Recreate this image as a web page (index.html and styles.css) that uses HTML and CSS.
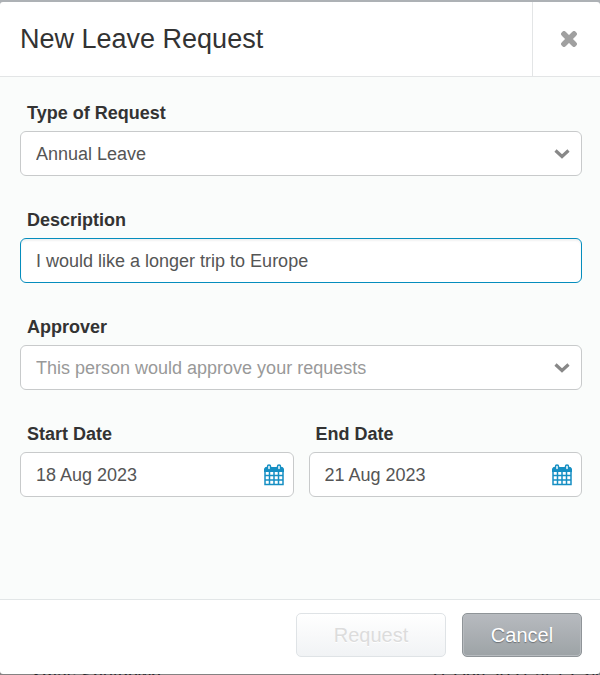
FILE: index.html
```html
<!DOCTYPE html>
<html lang="en">
<head>
<meta charset="utf-8">
<meta name="viewport" content="width=device-width, initial-scale=1">
<title>New Leave Request</title>
<link rel="stylesheet" href="styles.css">
</head>
<body>
<svg class="sprite" aria-hidden="true">
  <symbol id="calendar" viewBox="0 0 20 22">
    <path fill="none" stroke="currentColor" stroke-width="1.500" d="M1 5V20.500H19V5M1 11.500H19M1 16H19M5.500 7V20M10 7V20M14.500 7V20"/>
    <path fill="currentColor" d="M1.500 3H18.500L20 4.500V8H0V4.500Z"/>
    <rect x="3.500" y="1" width="3" height="5" rx="1.500" fill="#fff" stroke="currentColor" stroke-width="1.500"/>
    <rect x="13.500" y="1" width="3" height="5" rx="1.500" fill="#fff" stroke="currentColor" stroke-width="1.500"/>
  </symbol>
  <symbol id="chevron" viewBox="0 0 16 10">
    <path d="M1.500 1.500L8 7.500L14.500 1.500" fill="none" stroke="currentColor" stroke-width="3.200"/>
  </symbol>
</svg>
<form class="dialog">
  <header class="dialog-header">
    <h1 class="dialog-title">New Leave Request</h1>
    <button class="close" type="button" aria-label="Close">
      <svg width="18" height="16" viewBox="0 0 18 16"><path d="M4 3L14 13M14 3L4 13" fill="none" stroke="currentColor" stroke-width="4.500" stroke-linecap="square"/><path d="M4 3L14 13M14 3L4 13" fill="none" stroke="currentColor" stroke-width="5.500" stroke-linecap="round"/></svg>
    </button>
  </header>
  <main class="dialog-body">
    <div class="field">
      <label for="type">Type of Request</label>
      <div class="control">
        <select id="type"><option>Annual Leave</option></select>
        <svg class="chevron"><use href="#chevron"/></svg>
      </div>
    </div>
    <div class="field">
      <label for="description">Description</label>
      <div class="control active">
        <input id="description" type="text" value="I would like a longer trip to Europe">
      </div>
    </div>
    <div class="field">
      <label for="approver">Approver</label>
      <div class="control">
        <select id="approver" class="placeholder"><option>This person would approve your requests</option></select>
        <svg class="chevron"><use href="#chevron"/></svg>
      </div>
    </div>
    <div class="dates">
      <div class="field">
        <label for="start">Start Date</label>
        <div class="control">
          <input id="start" type="text" value="18 Aug 2023">
          <svg class="calendar"><use href="#calendar"/></svg>
        </div>
      </div>
      <div class="field">
        <label for="end">End Date</label>
        <div class="control">
          <input id="end" type="text" value="21 Aug 2023">
          <svg class="calendar"><use href="#calendar"/></svg>
        </div>
      </div>
    </div>
  </main>
  <footer class="dialog-footer">
    <button class="button request" type="submit" disabled>Request</button>
    <button class="button cancel" type="button">Cancel</button>
  </footer>
</form>
<div class="underlay" aria-hidden="true">
  <span>Xmas Shutdown</span>
  <span>21 Dec 2021 at 12:34</span>
</div>
</body>
</html>
```
FILE: styles.css
```css
* {
  box-sizing: border-box;
}

body {
  margin: 0;
  min-height: 100vh;
  display: flex;
  flex-direction: column;
  padding-top: 2px;
  background: linear-gradient(#adb1b5 50%, #858282 50%);
  font-family: "Liberation Sans", Arial, sans-serif;
  font-size: 18px;
  color: #333;
}

.sprite {
  position: absolute;
  width: 0;
  height: 0;
}

.dialog {
  flex: 1;
  display: flex;
  flex-direction: column;
  border-radius: 3px;
  overflow: hidden;
  background: #fff;
}

.dialog-header {
  display: flex;
  justify-content: space-between;
  min-height: 75px;
  border-bottom: 1px solid #e3e5e6;
}

.dialog-title {
  align-self: center;
  margin: 0;
  padding-left: 20px;
  font-size: 27px;
  line-height: 32px;
  font-weight: 400;
}

.close {
  display: flex;
  align-items: center;
  justify-content: center;
  width: 68px;
  padding: 0 0 0 4px;
  border: 0;
  border-left: 1px solid #e3e5e6;
  background: none;
  color: #a0a0a0;
}

.dialog-body {
  flex: 1;
  display: flex;
  flex-direction: column;
  gap: 32px;
  padding: 24px 18px 24px 20px;
  background: #fafcfb;
}

.field {
  display: flex;
  flex-direction: column;
  gap: 6px;
  min-width: 0;
}

.field label {
  padding-left: 7px;
  line-height: 24px;
  font-weight: 700;
}

.control {
  display: flex;
  align-items: center;
  height: 45px;
  border: 1px solid #c8cacb;
  border-radius: 6px;
  background: #fff;
}

.control.active {
  border-color: #058dbd;
  box-shadow: inset 0 2px 2px #f2f2f2;
}

.control input,
.control select {
  flex: 1;
  min-width: 0;
  height: 100%;
  margin: 0;
  padding: 0 0 0 15px;
  border: 0;
  outline: 0;
  appearance: none;
  background: none;
  font: inherit;
  color: #555;
}

.control input {
  padding-top: 2px;
}

.control .placeholder {
  color: #999;
}

.chevron {
  flex: none;
  width: 16px;
  height: 10px;
  margin-right: 11px;
  color: #888;
  pointer-events: none;
}

.calendar {
  flex: none;
  width: 20px;
  height: 22px;
  margin-right: 9px;
  color: #168fc3;
}

.dates {
  display: grid;
  grid-template-columns: 1fr 1fr;
  gap: 15px;
}

.dialog-footer {
  display: flex;
  justify-content: flex-end;
  gap: 16px;
  padding: 13px 18px 17px;
  border-top: 1px solid #e2e6e7;
}

.button {
  height: 44px;
  border-radius: 5px;
  font: inherit;
  font-size: 20px;
}

.request {
  width: 150px;
  border: 1px solid #dfe3e6;
  background: linear-gradient(#fff, #f1f3f5);
  color: #dcdcdc;
  text-shadow: 0 1px 0 #fff;
}

.cancel {
  width: 120px;
  border: 1px solid #8f9498;
  background: linear-gradient(#b7babf, #9da3a6);
  box-shadow: inset 0 0 0 1px #b7bbbf;
  color: #fff;
  text-shadow: 0 1px 1px #6b7074;
}

/* Strip of the page that shows below the dialog */
.underlay {
  display: flex;
  justify-content: space-between;
  height: 1px;
  padding-left: 30px;
  overflow: hidden;
  line-height: 4px;
  white-space: nowrap;
  color: #292429;
}
```
